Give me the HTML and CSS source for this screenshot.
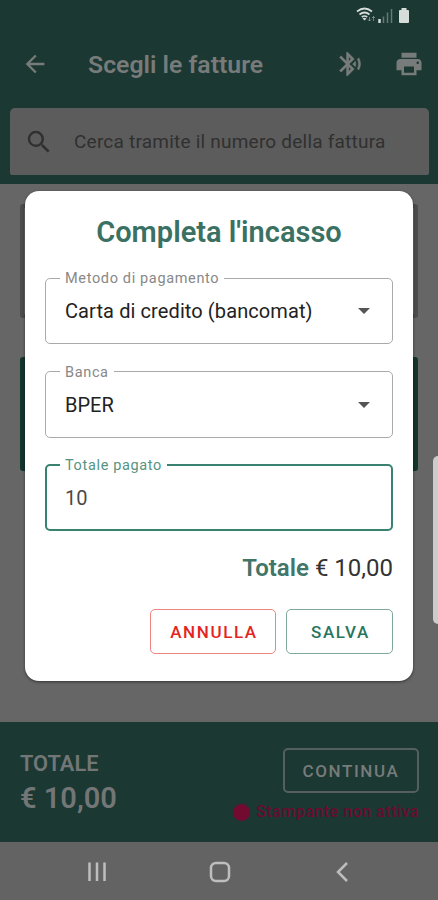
FILE: index.html
```html
<!DOCTYPE html>
<html lang="it">
<head>
  <meta charset="UTF-8">
  <title>Scegli le fatture</title>
  <link rel="stylesheet" href="styles.css">
</head>
<body>

  <header class="header">
    <div class="status-bar">
      <svg class="wifi" width="20" height="16" viewBox="0 0 20 16" fill="none" stroke="currentColor" stroke-width="1.7">
        <path d="M1 4.500Q8.500-1.500 16 4.500M3.500 7.500Q8.500 3.500 13.500 7.500M5.800 10Q8.500 8 11.200 10"/>
        <path d="M8.500 13.500L6.500 11.500Q8.500 10 10.500 11.500Z" fill="currentColor" stroke="none"/>
        <path d="M13.500 14V10M12 12.500L13.500 14L15 12.500M17.500 14V9.500M16 11L17.500 9.500L19 11" stroke-width=".8" opacity=".6"/>
      </svg>
      <svg class="signal" width="15" height="15" viewBox="0 0 15 15" stroke="currentColor" stroke-width="1.5">
        <path d="M1.500 11V15" stroke-width="2.500"/>
        <path d="M5.500 8.500V15M9.500 4.500V15M13.500 1V15" opacity=".4"/>
      </svg>
      <svg class="battery" width="12" height="17" viewBox="0 0 12 17" fill="currentColor">
        <path d="M3.500 1H8.500V3H10Q11 3 11 4V15Q11 16 10 16H2Q1 16 1 15V4Q1 3 2 3H3.500Z"/>
      </svg>
    </div>

    <div class="toolbar">
      <svg class="back" width="28" height="28" viewBox="0 0 24 24" fill="currentColor">
        <path d="M20 11H7.830L13.420 5.410L12 4L4 12L12 20L13.410 18.590L7.830 13H20Z"/>
      </svg>
      <h1>Scegli le fatture</h1>
      <svg class="bluetooth" width="28" height="28" viewBox="0 0 24 24" fill="currentColor" stroke="currentColor" stroke-width=".4">
        <path d="M14.240 12.010l2.320 2.320c.28-.72.44-1.510.44-2.330s-.16-1.590-.43-2.310zM19.530 6.710l-1.260 1.260c.63 1.210.98 2.570.98 4.020s-.36 2.820-.98 4.020l1.200 1.200c.97-1.540 1.540-3.360 1.540-5.310-.01-1.890-.55-3.670-1.480-5.190zM15.710 7.710L10 2H9v7.590L4.410 5 3 6.410 8.590 12 3 17.590 4.410 19 9 14.410V22h1l5.710-5.710-4.300-4.290zM11 5.830l1.880 1.880L11 9.590zM12.880 16.290L11 18.170v-3.760z"/>
      </svg>
      <svg class="printer" width="30" height="30" viewBox="0 0 24 24" fill="currentColor">
        <path d="M19 8H5c-1.660 0-3 1.340-3 3v6h4v4h12v-4h4v-6c0-1.660-1.340-3-3-3zM16 19H8v-5h8zM19 12c-.55 0-1-.45-1-1s.45-1 1-1 1 .45 1 1-.45 1-1 1zM18 3H6v4h12z"/>
      </svg>
    </div>

    <div class="search">
      <svg width="30" height="30" viewBox="0 0 24 24" fill="currentColor">
        <path d="M15.500 14h-.79l-.28-.27A6.471 6.471 0 0 0 16 9.500 6.500 6.500 0 1 0 9.500 16c1.610 0 3.090-.59 4.230-1.570l.27.28v.79l5 4.990L20.490 19zM9.500 14C7.010 14 5 11.990 5 9.500S7.010 5 9.500 5 14 7.010 14 9.500 11.990 14 9.500 14z"/>
      </svg>
      <span>Cerca tramite il numero della fattura</span>
    </div>
  </header>

  <main class="invoices">
    <div class="invoice"></div>
    <div class="invoice selected"></div>
  </main>

  <footer class="footer">
    <div class="footer-total">
      <div class="label">TOTALE</div>
      <div class="amount">€ 10,00</div>
    </div>
    <div class="footer-actions">
      <button class="btn-continue">CONTINUA</button>
      <div class="printer-status"><i></i><span>Stampante non attiva</span></div>
    </div>
  </footer>

  <nav class="android-nav">
    <svg width="24" height="24" viewBox="0 0 24 24"><path d="M4.500 2.500V21M12 2.500V21M19.500 2.500V21"/></svg>
    <svg width="24" height="24" viewBox="0 0 24 24"><rect x="3" y="3" width="18" height="18" rx="5"/></svg>
    <svg width="24" height="24" viewBox="0 0 24 24"><path d="M17 3L8 12L17 21"/></svg>
  </nav>

  <div class="edge-handle"></div>

  <div class="modal">
    <h2>Completa l'incasso</h2>

    <fieldset class="field">
      <legend>Metodo di pagamento</legend>
      <span class="method">Carta di credito (bancomat)</span>
      <i class="caret"></i>
    </fieldset>

    <fieldset class="field">
      <legend>Banca</legend>
      <span class="bank">BPER</span>
      <i class="caret"></i>
    </fieldset>

    <fieldset class="field focused">
      <legend>Totale pagato</legend>
      <span>10</span>
    </fieldset>

    <div class="total"><strong>Totale</strong> € 10,00</div>

    <div class="buttons">
      <button class="btn-cancel">ANNULLA</button>
      <button class="btn-save">SALVA</button>
    </div>
  </div>

</body>
</html>
```
FILE: styles.css
```css
* {
  box-sizing: border-box;
}

body {
  margin: 0;
  width: 438px;
  height: 900px;
  display: flex;
  flex-direction: column;
  position: relative;
  overflow: hidden;
  background: #666;
  font-family: Roboto, sans-serif;
}

h1, h2 {
  margin: 0;
  font-weight: 600;
}

svg {
  display: block;
  flex: none;
}

button {
  background: none;
  font-family: inherit;
  font-weight: 500;
  padding: 0;
  border-radius: 5px;
}

/* header */
.header {
  height: 184px;
  background: #1b3832;
  color: #777b7a;
}

.status-bar {
  height: 32px;
  padding: 7px 28px 0 0;
  display: flex;
  justify-content: flex-end;
  color: #d5dcda;
}

.signal {
  margin: 1px 5px 0 2px;
}

.toolbar {
  height: 64px;
  padding: 0 14px 0 21px;
  display: flex;
  align-items: center;
}

.toolbar h1 {
  flex: 1;
  margin-left: 39px;
  font-size: 24.8px;
  line-height: 30px;
  padding-top: 2px;
}

.bluetooth {
  margin-right: 30px;
}

.search {
  height: 67px;
  margin: 12px 9px 0 10px;
  padding-left: 14px;
  display: flex;
  align-items: center;
  background: #5c5c5c;
  border-radius: 5px 5px 2px 2px;
  color: #303030;
}

.search span {
  margin-left: 20px;
  font-size: 19px;
  letter-spacing: 0.22px;
}

/* invoices behind the dialog */
.invoices {
  flex: 1;
  padding: 20px;
}

.invoice {
  height: 114px;
  margin-bottom: 39px;
  border: 4px solid #4c4c4c;
  border-radius: 3px;
}

.invoice.selected {
  border: 5px solid #12352c;
}

/* footer */
.footer {
  height: 120px;
  padding: 26px 19px 0 20px;
  display: flex;
  justify-content: space-between;
  background: #1b3832;
  color: #727676;
}

.footer-total {
  padding-top: 1px;
  font-weight: 600;
}

.footer-total .label {
  font-size: 21.8px;
  line-height: 30px;
}

.footer-total .amount {
  font-size: 29px;
  line-height: 39px;
}

.footer-actions {
  display: flex;
  flex-direction: column;
  align-items: flex-end;
}

.btn-continue {
  width: 136px;
  height: 45px;
  border: 2px solid #555f5d;
  color: #777b7a;
  font-size: 17px;
  letter-spacing: 1.6px;
}

.printer-status {
  margin-top: 9px;
  display: flex;
  align-items: center;
  gap: 6px;
  color: #680c30;
  font-size: 16px;
  line-height: 20px;
  font-weight: 500;
  letter-spacing: 0.5px;
}

.printer-status i {
  width: 17px;
  height: 17px;
  border-radius: 50%;
  background: #730a2f;
}

.android-nav {
  height: 58px;
  padding: 2px 84px 0 85px;
  display: flex;
  align-items: center;
  justify-content: space-between;
  background: #636363;
}

.android-nav svg {
  fill: none;
  stroke: #bebebe;
  stroke-width: 2.5;
}

.edge-handle {
  position: absolute;
  top: 456px;
  right: 0;
  width: 5px;
  height: 168px;
  background: #ccc;
  border-radius: 5px 0 0 5px;
}

/* dialog */
.modal {
  position: absolute;
  top: 191px;
  left: 25px;
  width: 388px;
  height: 490px;
  padding: 22px 20px 0;
  background: #fff;
  border-radius: 14px;
  box-shadow: 0 1px 3px rgba(0, 0, 0, 0.5);
}

.modal h2 {
  margin-bottom: 19px;
  text-align: center;
  font-size: 29px;
  line-height: 38px;
  color: #3a7163;
}

.field {
  position: relative;
  height: 74px;
  margin: 0 0 19.7px;
  padding: 0 22px 0 14px;
  border: 1px solid #aaa;
  border-radius: 5px;
  display: flex;
  justify-content: space-between;
  font-size: 20px;
  color: #222;
}

.field legend {
  height: 16px;
  padding: 0 5px;
  font-size: 14.5px;
  line-height: 18px;
  letter-spacing: 0.65px;
  color: #888;
}

.field span {
  margin-left: 5px;
  line-height: 50px;
}

.field .method {
  letter-spacing: 0.1px;
}

.field.focused {
  border: 2px solid #38826f;
  padding-left: 13px;
}

.field.focused legend {
  color: #559482;
}

.field.focused span {
  color: #4a4a4a;
}

.caret {
  margin-top: 22px;
  width: 0;
  height: 0;
  border: 6px solid transparent;
  border-top-color: #555;
  border-bottom: 0;
}

.total {
  padding-top: 1px;
  text-align: right;
  font-size: 24px;
  line-height: 32px;
  color: #333;
}

.total strong {
  font-weight: 600;
  color: #417568;
}

.buttons {
  margin-top: 25px;
  display: flex;
  justify-content: flex-end;
  gap: 10px;
}

.buttons button {
  height: 45px;
  padding-left: 2px;
  font-size: 17px;
  letter-spacing: 1.6px;
}

.btn-cancel {
  width: 126px;
  border: 1px solid #ee8580;
  color: #e32421;
}

.btn-save {
  width: 107px;
  border: 1px solid #80a79c;
  color: #287660;
}
```
